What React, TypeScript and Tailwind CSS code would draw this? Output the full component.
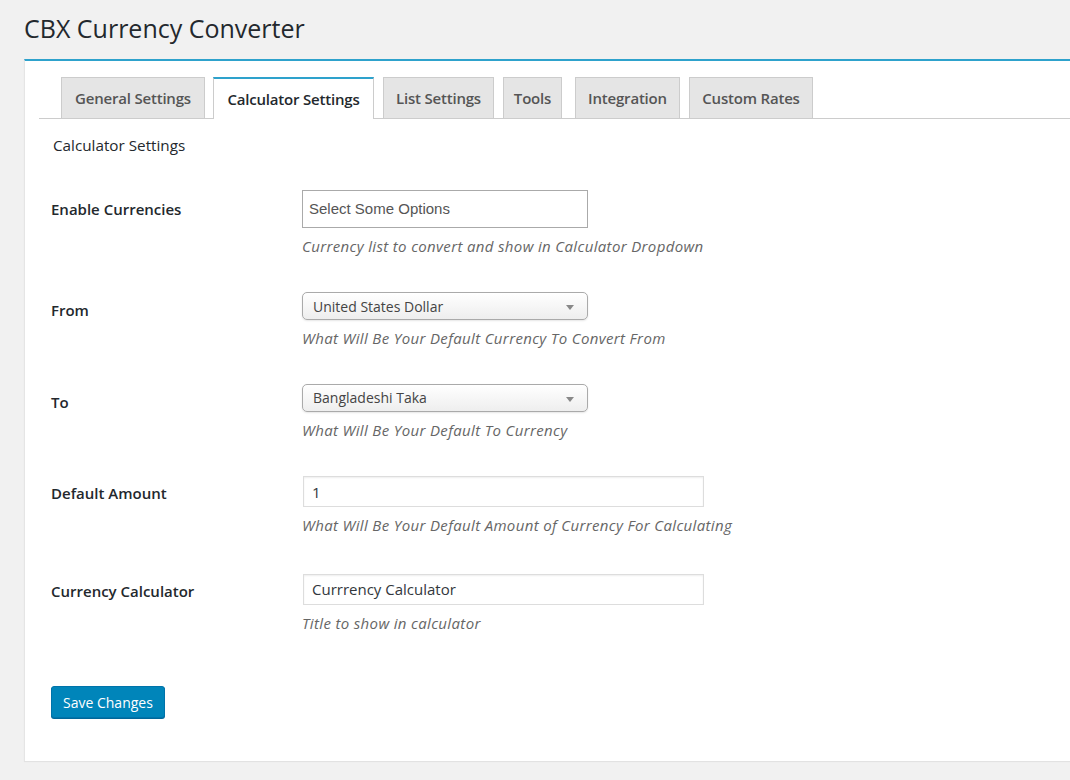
import { useState } from "react";

const tabs = [
  { name: "General Settings", cls: "w-[144px] mr-[8px]" },
  { name: "Calculator Settings", cls: "w-[161px] mr-[9px]" },
  { name: "List Settings", cls: "w-[111px] mr-[9px]" },
  { name: "Tools", cls: "w-[59px] mr-[13px]" },
  { name: "Integration", cls: "w-[105px] mr-[9px]" },
  { name: "Custom Rates", cls: "w-[124px]" },
];

function Caret() {
  return (
    <svg width="8" height="5" viewBox="0 0 8 5" className="absolute right-[13px] top-[12px]">
      <path d="M0 0 L8 0 L4 5 Z" fill="#888" />
    </svg>
  );
}

function Row({ label, desc, children, top }: { label: string; desc: string; children: React.ReactNode; top: string }) {
  return (
    <div className="flex">
      <div className={`w-[251px] shrink-0 text-[15px] font-semibold text-[#23282d] ${top}`}>{label}</div>
      <div>
        {children}
        <p className="mt-[7px] text-[15px] italic tracking-[0.35px] text-[#666]">{desc}</p>
      </div>
    </div>
  );
}

export default function App() {
  const [active] = useState(1);
  const [amount, setAmount] = useState("1");
  const [title, setTitle] = useState("Currrency Calculator");

  return (
    <div className="min-h-[780px] bg-[#f1f1f1] pl-[24px] pt-[13px] pb-[18px] font-['Open_Sans',sans-serif] text-[#23282d]">
      <h1 className="text-[25px] leading-[30px]">CBX Currency Converter</h1>

      <div className="mt-[16px] h-[702px] border-t-2 border-l border-[#e5e5e5] border-t-[#2ea2cc] bg-white shadow-[0_1px_1px_rgba(0,0,0,0.06)]">
        <div className="ml-[14px] mt-[16px] flex items-end border-b border-[#ccc] pl-[22px]">
          {tabs.map((t, i) => (
            <div
              key={t.name}
              className={
                i === active
                  ? `${t.cls} -mb-px h-[42px] border border-b-0 border-[#ccc] border-t-2 border-t-[#2ea2cc] bg-white pt-[9px] text-center text-[15px] font-semibold tracking-[-0.2px] text-[#23282d]`
                  : `${t.cls} h-[41px] border border-b-0 border-[#ccc] bg-[#e5e5e5] pt-[9px] text-center text-[15px] font-semibold tracking-[-0.2px] text-[#555]`
              }
            >
              {t.name}
            </div>
          ))}
        </div>

        <div className="pl-[26px]">
          <h2 className="mt-[15px] pl-[2px] text-[15.25px]">Calculator Settings</h2>

          <div className="mt-[33px] flex flex-col">
            <Row label="Enable Currencies" desc="Currency list to convert and show in Calculator Dropdown" top="pt-[8px]">
              <div className="flex h-[38px] w-[286px] items-center border border-[#aaa] pl-[6px] font-['Liberation_Sans',sans-serif] text-[15px] text-[#555]">
                Select Some Options
              </div>
            </Row>

            <div className="h-[35px]" />
            <Row label="From" desc="What Will Be Your Default Currency To Convert From" top="pt-[7px]">
              <div className="relative flex h-[28px] w-[286px] items-center rounded-[5px] border border-[#aaa] bg-gradient-to-b from-white to-[#eee] pl-[10px] text-[14px] text-[#444] shadow-[0_1px_2px_rgba(0,0,0,0.1)]">
                United States Dollar
                <Caret />
              </div>
            </Row>

            <div className="h-[34px]" />
            <Row label="To" desc="What Will Be Your Default To Currency" top="pt-[7px]">
              <div className="relative flex h-[28px] w-[286px] items-center rounded-[5px] border border-[#aaa] bg-gradient-to-b from-white to-[#eee] pl-[10px] text-[14px] text-[#444] shadow-[0_1px_2px_rgba(0,0,0,0.1)]">
                Bangladeshi Taka
                <Caret />
              </div>
            </Row>

            <div className="h-[35px]" />
            <Row label="Default Amount" desc="What Will Be Your Default Amount of Currency For Calculating" top="pt-[6px]">
              <input
                value={amount}
                onChange={(e) => setAmount(e.target.value)}
                className="ml-px h-[31px] w-[401px] border border-[#ddd] px-[8px] text-[15px] text-[#32373c] shadow-[inset_0_1px_2px_rgba(0,0,0,0.07)] outline-none"
              />
            </Row>

            <div className="h-[37px]" />
            <Row label="Currency Calculator" desc="Title to show in calculator" top="pt-[6px]">
              <input
                value={title}
                onChange={(e) => setTitle(e.target.value)}
                className="ml-px h-[31px] w-[401px] border border-[#ddd] px-[8px] text-[15px] text-[#32373c] shadow-[inset_0_1px_2px_rgba(0,0,0,0.07)] outline-none"
              />
            </Row>
          </div>

          <button className="mt-[52px] h-[32px] rounded-[3px] border border-[#0073aa] bg-[#0085ba] px-[11px] text-[14px] text-white shadow-[0_1px_0_#006799]">
            Save Changes
          </button>
        </div>
      </div>
    </div>
  );
}
